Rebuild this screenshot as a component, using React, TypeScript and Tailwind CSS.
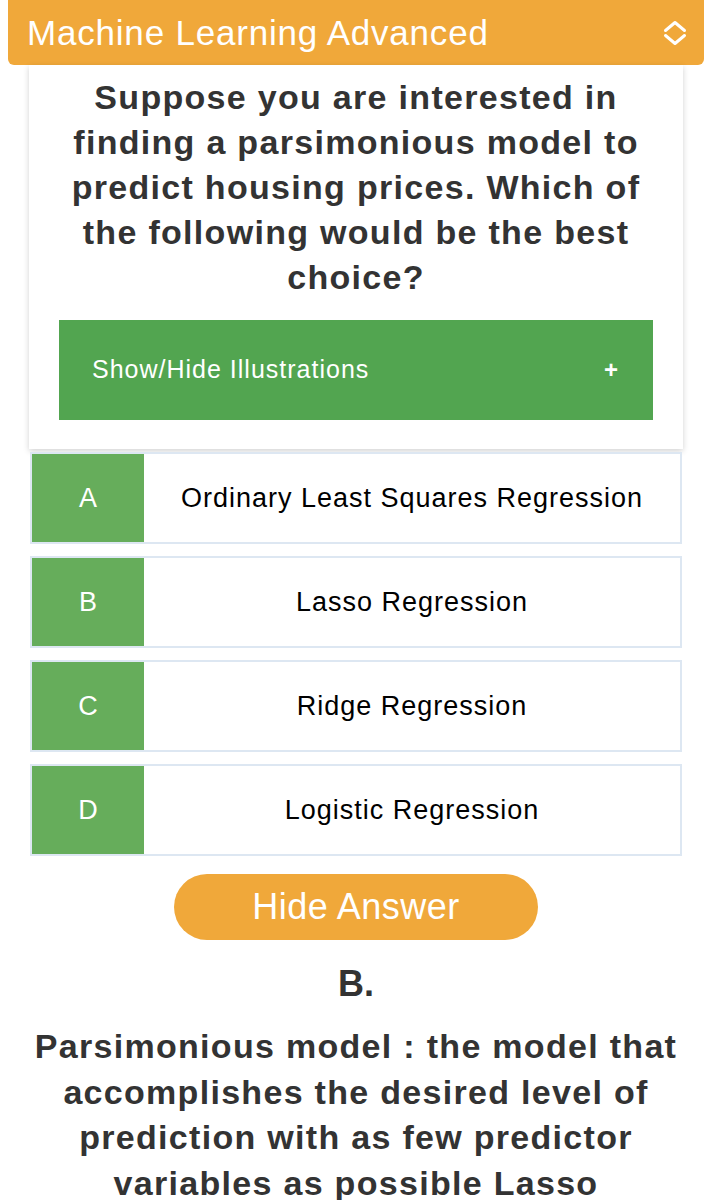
const options = [
  { letter: "A", text: "Ordinary Least Squares Regression" },
  { letter: "B", text: "Lasso Regression" },
  { letter: "C", text: "Ridge Regression" },
  { letter: "D", text: "Logistic Regression" },
];

function UpDownIcon() {
  return (
    <svg width="24" height="26" viewBox="0 0 24 26" fill="none" stroke="currentColor" strokeWidth="3" strokeLinecap="round" strokeLinejoin="round">
      <path d="M2.5 10.5 12 2.5l9.5 8" />
      <path d="M2.5 15.5 12 23.5l9.5-8" />
    </svg>
  );
}

export default function App() {
  return (
    <div className="min-h-screen bg-white font-['Liberation_Sans',Arial,sans-serif] text-[#333]">
      <header className="mx-2 flex h-[65px] items-center justify-between rounded-b-md bg-[#f0a83a] pl-[19px] pr-[17px] text-white">
        <h1 className="text-[35px] leading-none tracking-[0.8px]">Machine Learning Advanced</h1>
        <UpDownIcon />
      </header>

      <section className="mx-[29px] bg-white px-[30px] pb-[29px] pt-[10px] shadow-[0_2px_6px_rgba(0,0,0,0.18)]">
        <p className="text-center text-[34px] font-bold leading-[45px] tracking-[1.3px]">
          Suppose you are interested in finding a parsimonious model to predict housing prices. Which of the
          following would be the best choice?
        </p>
        <button className="mt-[20px] flex h-[100px] w-full items-center justify-between bg-[#52a550] pl-[33px] pr-[34px] text-[25px] tracking-[1px] text-white">
          <span>Show/Hide Illustrations</span>
          <span className="text-[24px] font-bold">+</span>
        </button>
      </section>

      <div className="mx-[30px] mt-[3px] flex flex-col gap-[12px]">
        {options.map((o) => (
          <div key={o.letter} className="flex h-[92px] border-2 border-[#dde7f2] bg-white">
            <div className="flex w-[112px] items-center justify-center bg-[#66ad5b] text-[27px] text-white">
              {o.letter}
            </div>
            <div className="flex flex-1 items-center justify-center text-[27px] tracking-[1px] text-black">
              {o.text}
            </div>
          </div>
        ))}
      </div>

      <div className="mt-[18px] flex justify-center">
        <button className="h-[66px] w-[364px] rounded-full bg-[#f0a83a] text-[36px] tracking-[0.5px] text-white">
          Hide Answer
        </button>
      </div>

      <p className="mt-[21px] text-center text-[36px] font-bold leading-[45px]">B.</p>

      <p className="mx-[20px] mt-[18px] text-center text-[34px] font-bold leading-[45.5px] tracking-[1.3px]">
        Parsimonious model : the model that accomplishes the desired level of prediction with as few predictor
        variables as possible Lasso
      </p>
    </div>
  );
}
